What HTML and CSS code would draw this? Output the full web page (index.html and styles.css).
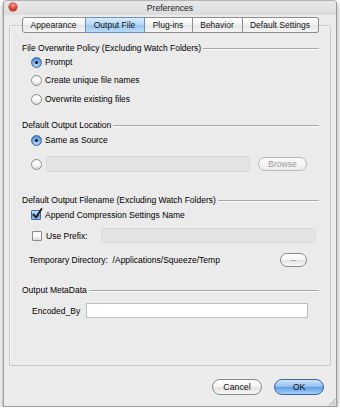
FILE: index.html
```html
<!DOCTYPE html>
<html>
<head>
<meta charset="utf-8">
<title>Preferences</title>
<link rel="stylesheet" href="styles.css">
</head>
<body>
<div class="window">
  <div class="titlebar">
    <span class="close"></span>
    <span class="title">Preferences</span>
  </div>
  <div class="content">
    <div class="tabs">
      <div class="tab tab-appearance">Appearance</div>
      <div class="tab tab-output selected">Output File</div>
      <div class="tab tab-plugins">Plug-ins</div>
      <div class="tab tab-behavior">Behavior</div>
      <div class="tab tab-defaults">Default Settings</div>
    </div>
    <div class="panel">
      <div class="head head-1"><span>File Overwrite Policy (Excluding Watch Folders)</span></div>
      <div class="row opt opt-1"><span class="radio on"></span><span>Prompt</span></div>
      <div class="row opt opt-2"><span class="radio"></span><span>Create unique file names</span></div>
      <div class="row opt opt-3"><span class="radio"></span><span>Overwrite existing files</span></div>

      <div class="head head-2"><span>Default Output Location</span></div>
      <div class="row opt opt-4"><span class="radio on"></span><span>Same as Source</span></div>
      <div class="row opt opt-5"><span class="radio"></span><span class="field disabled field-loc"></span><span class="btn small disabled btn-browse">Browse</span></div>

      <div class="head head-3"><span>Default Output Filename (Excluding Watch Folders)</span></div>
      <div class="row opt opt-6">
        <span class="check on"><svg width="13" height="13" viewBox="0 0 13 13"><path d="M2.5 6.5 L5 9.5 L10.5 1" fill="none" stroke="#1a1a1a" stroke-width="1.8" stroke-linecap="round" stroke-linejoin="round"/></svg></span>
        <span>Append Compression Settings Name</span>
      </div>
      <div class="row opt opt-7"><span class="check"></span><span class="prefix-label">Use Prefix:</span><span class="field disabled field-prefix"></span></div>
      <div class="row tmp"><span>Temporary Directory:&nbsp; /Applications/Squeeze/Temp</span><span class="btn small btn-dots">...</span></div>

      <div class="head head-4"><span>Output MetaData</span></div>
      <div class="row enc"><span class="enc-label">Encoded_By</span><span class="field field-enc"></span></div>
    </div>
    <div class="actions">
      <span class="btn big">Cancel</span>
      <span class="btn big primary">OK</span>
    </div>
    <div class="grip"><svg width="8" height="8" viewBox="0 0 8 8"><path d="M7.5 1 L1 7.5 M7.5 4 L4 7.5 M7.5 6.5 L6.5 7.5" stroke="#9a9a9a" stroke-width="1"/></svg></div>
  </div>
</div>
</body>
</html>
```

FILE: styles.css
```css
html, body {
  margin: 0;
  padding: 0;
  background: #ffffff;
}
body {
  font-family: "Liberation Sans", Arial, sans-serif;
  font-size: 8.5px;
  color: #000;
}
.window {
  margin-left: 3px;
  width: 334px;
  height: 407px;
  box-sizing: border-box;
  border: 1px solid #9c9c9c;
  border-top-color: #b4b4b4;
  border-radius: 4px 4px 0 0;
  background: #ececec;
  box-shadow: 0 3px 5px rgba(0, 0, 0, 0.45);
  display: flex;
  flex-direction: column;
}
.titlebar {
  height: 14px;
  flex: none;
  display: flex;
  align-items: center;
  justify-content: center;
  position: relative;
  border-radius: 3px 3px 0 0;
  background: linear-gradient(#e8e8e8, #dcdcdc);
}
.close {
  position: absolute;
  left: 5px;
  top: 2px;
  width: 8px;
  height: 8px;
  border-radius: 50%;
  background: radial-gradient(circle at 50% 30%, #ffb0a8 0, #e8493c 45%, #b3170e 100%);
  box-shadow: 0 0 0 0.5px #8d2a22;
}
.title {
  font-size: 8.6px;
  color: #222;
}
.content {
  flex: 1;
  display: flex;
  flex-direction: column;
  position: relative;
}
.tabs {
  margin-top: 2px;
  align-self: center;
  display: flex;
  height: 16px;
  position: relative;
  z-index: 1;
}
.tab {
  box-sizing: border-box;
  height: 16px;
  display: flex;
  align-items: center;
  justify-content: center;
  border: 1px solid #8e8e8e;
  border-left: none;
  background: linear-gradient(#ffffff, #f1f1f1 50%, #e6e6e6 51%, #f4f4f4);
  color: #111;
}
.tab-appearance { width: 64px; border-left: 1px solid #8e8e8e; border-radius: 3px 0 0 3px; }
.tab-output { width: 59px; }
.tab-plugins { width: 48px; }
.tab-behavior { width: 50px; }
.tab-defaults { width: 76px; border-radius: 0 3px 3px 0; }
.tab.selected {
  background: linear-gradient(#d9ecfd, #b3d6f6 50%, #97c6f1 51%, #b9dbf7);
  border-color: #6d8fb8;
  border-left: 1px solid #6d8fb8;
  margin-left: -1px;
  width: 60px;
}
.panel {
  margin: -8px 5px 0 5px;
  height: 341px;
  box-sizing: border-box;
  border: 1px solid #c9c9c9;
  border-radius: 2px;
  background: #ebebeb;
  box-shadow: inset 1px 1px 0 #f6f6f6;
  padding: 16px 11px 0 12px;
  display: flex;
  flex-direction: column;
}
.head {
  height: 12px;
  display: flex;
  align-items: center;
  flex: none;
}
.head::after {
  content: "";
  flex: 1;
  margin-left: 2px;
  height: 0;
  border-top: 1px solid #a9a9a9;
  border-bottom: 1px solid #fafafa;
  margin-top: 1px;
}
.row {
  display: flex;
  align-items: center;
  flex: none;
}
.opt { padding-left: 9px; height: 14px; }
.opt-1 { margin-top: 1px; }
.opt-2 { margin-top: 4px; }
.opt-3 { margin-top: 5px; }
.head-2 { margin-top: 13px; }
.opt-4 { margin-top: 2px; }
.opt-5 { margin-top: 9px; height: 16px; }
.head-3 { margin-top: 22px; }
.opt-6 { margin-top: 2px; }
.opt-7 { margin-top: 6px; height: 15px; padding-left: 10px; }
.tmp { margin-top: 10px; height: 13px; padding-left: 7px; padding-right: 12px; justify-content: space-between; }
.head-4 { margin-top: 18px; }
.enc { margin-top: 7px; height: 15px; padding-left: 10px; }

.radio {
  width: 11px;
  height: 11px;
  box-sizing: border-box;
  border-radius: 50%;
  border: 1px solid #8c8c8c;
  background: linear-gradient(#f4f4f4, #ffffff 40%, #dcdcdc);
  margin-right: 3px;
  flex: none;
  display: flex;
  align-items: center;
  justify-content: center;
}
.radio.on {
  border-color: #40689e;
  background: radial-gradient(circle at 50% 75%, #b5dbff 0, #6aa6e6 55%, #3b76c4 100%);
}
.radio.on::after {
  content: "";
  width: 3px;
  height: 3px;
  border-radius: 50%;
  background: #111;
}
.check {
  width: 10px;
  height: 10px;
  box-sizing: border-box;
  border: 1px solid #8c8c8c;
  border-radius: 1px;
  background: linear-gradient(#f6f6f6, #ffffff 40%, #dedede);
  margin-right: 4px;
  flex: none;
  position: relative;
}
.check.on {
  border-color: #46699a;
  background: linear-gradient(#c4e0fb, #7fb3ea 50%, #5b97dc 51%, #8cc3f3);
}
.check svg {
  position: absolute;
  left: -1px;
  top: -3px;
}
.field {
  box-sizing: border-box;
  height: 16px;
  border: 1px solid #a8a8a8;
  background: #fff;
  flex: none;
}
.field.disabled {
  border-color: #dcdcdc;
  background: #e4e4e4;
}
.field-loc { width: 204px; margin-left: 1px; }
.field-prefix { width: 215px; margin-left: 13px; height: 15px; }
.field-enc { width: 222px; margin-left: 6px; height: 15px; border-color: #bdbdbd; }
.btn {
  box-sizing: border-box;
  display: flex;
  align-items: center;
  justify-content: center;
  border-radius: 8px;
  border: 1px solid #8a8a8a;
  background: linear-gradient(#ffffff, #f4f4f4 50%, #e2e2e2 51%, #f8f8f8);
  color: #111;
  flex: none;
}
.btn.small { height: 14px; }
.btn-browse { width: 49px; margin-left: 8px; }
.btn.disabled { border-color: #b9b9b9; color: #9a9a9a; background: linear-gradient(#fafafa, #ededed); }
.btn-dots { width: 27px; height: 13px; font-size: 7px; padding-bottom: 3px; }
.actions {
  display: flex;
  justify-content: flex-end;
  gap: 12px;
  margin-top: 13px;
  margin-right: 12px;
}
.btn.big { height: 16px; width: 50px; font-size: 8.8px; }
.btn.primary {
  border-color: #3b65a1;
  background: linear-gradient(#cfe5fb, #8dbdf0 50%, #5c9ce4 51%, #a5d0fa);
}
.grip {
  position: absolute;
  right: 0;
  bottom: 0;
  width: 8px;
  height: 8px;
}
.grip svg { display: block; }
```
